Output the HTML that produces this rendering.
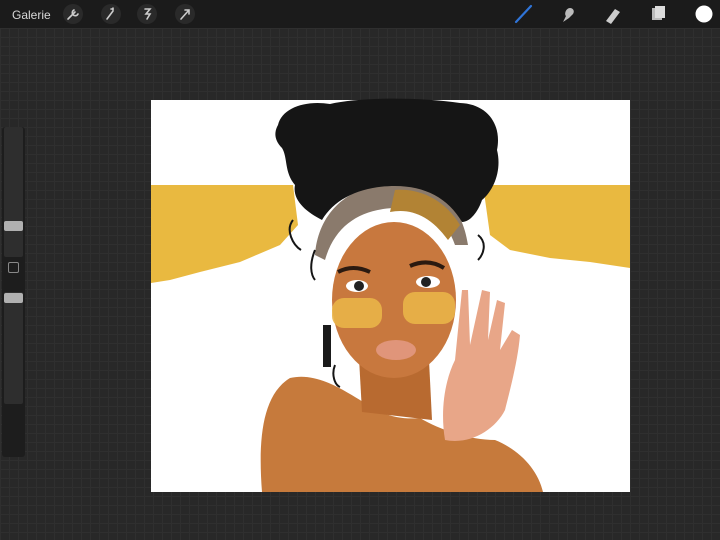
<!DOCTYPE html>
<html><head><style>
html,body{margin:0;padding:0;width:720px;height:540px;overflow:hidden;background:#282828;font-family:"Liberation Sans",sans-serif}
.grid{position:absolute;left:0;top:28px;width:720px;height:512px;background-color:#282828;background-image:linear-gradient(#2f2f2f 1px,transparent 1px),linear-gradient(90deg,#2f2f2f 1px,transparent 1px);background-size:9px 9px}
.top{position:absolute;left:0;top:0;width:720px;height:28px;background:#1b1b1b}
.gal{position:absolute;left:12px;top:8px;color:#d8d8d8;font-size:12px}
.ic{position:absolute;top:4px;width:20px;height:20px;border-radius:50%;background:#2a2a2a}
.side{position:absolute;left:2px;top:127px;width:23px;height:330px;background:#1d1d1d;border-radius:3px}
</style></head><body>
<div class="grid"></div>
<div class="top">
<div class="gal">Galerie</div>
<div class="ic" style="left:63px"></div><div class="ic" style="left:101px"></div><div class="ic" style="left:137px"></div><div class="ic" style="left:175px"></div>
<svg width="720" height="28" style="position:absolute;left:0;top:0">
<g stroke="#ccc" stroke-width="1.6" fill="none" stroke-linecap="round">
<path d="M68 19 L75 12 M74 10 a3 3 0 1 0 4 4"/>
<path d="M107 19 L113 11 M113 8 v2 M111 9 h2"/>
<path d="M145 9 h5 l-4 5 h4 l-3 5"/>
<path d="M181 19 L189 10 M185 10 h4 v4"/>
</g>
<path d="M516 22 L531 6" stroke="#2f74d8" stroke-width="2.2" stroke-linecap="round"/>
<path d="M563 22 l3-6 c-2-2 0-8 4-8 c3 0 5 3 3 6 l-4 4 z" fill="#bbb"/>
<path d="M606 21 l9-12 l5 3 l-9 12 z" fill="#ccc"/>
<rect x="652" y="8" width="10" height="12" fill="#bbb"/><rect x="655" y="6" width="10" height="12" fill="#ddd"/>
<circle cx="704" cy="14" r="8.5" fill="#fff"/>
</svg>
</div>
<div class="side">
<div style="position:absolute;left:2px;top:0;width:19px;height:130px;background:#2e2e2e;border-radius:2px"></div>
<div style="position:absolute;left:2px;top:94px;width:19px;height:10px;background:#b0b0b0;border-radius:2px"></div>
<div style="position:absolute;left:6px;top:135px;width:9px;height:9px;border:1.5px solid #888;border-radius:2px"></div>
<div style="position:absolute;left:2px;top:165px;width:19px;height:112px;background:#2e2e2e;border-radius:2px"></div>
<div style="position:absolute;left:2px;top:166px;width:19px;height:10px;background:#b0b0b0;border-radius:2px"></div>
</div>
<svg width="720" height="540" style="position:absolute;left:0;top:0">
<rect x="151" y="100" width="479" height="392" fill="#fff"/>
<path d="M151 185 H293 L298 225 L280 245 L240 262 L200 272 L170 280 L151 283 Z" fill="#e9b940"/>
<path d="M483 185 H630 V268 L590 262 L550 258 L510 250 L490 235 Z" fill="#e9b940"/>
<!-- body -->
<path d="M262 492 C258 440 262 395 290 378 C315 372 340 388 360 400 C380 415 400 420 420 418 C440 430 470 440 495 440 C520 450 538 470 543 492 Z" fill="#c67a3c"/>
<path d="M358 340 L428 340 L432 420 L362 412 Z" fill="#b86a30"/>
<!-- face -->
<ellipse cx="394" cy="300" rx="62" ry="78" fill="#c8783e"/>
<!-- headband -->
<path d="M315 255 C318 215 345 185 395 183 C440 185 462 205 468 245 L455 245 C445 215 420 205 393 208 C360 210 335 225 325 260 Z" fill="#8a7a6c"/>
<path d="M395 190 C420 188 445 200 460 225 L448 240 C430 215 410 208 390 212 Z" fill="#b28334"/>
<!-- hair -->
<path d="M278 125 C282 108 305 100 330 104 C360 97 420 97 460 103 C488 104 502 125 497 150 C502 170 494 190 482 200 C478 212 470 222 462 222 C448 198 425 186 395 186 C362 186 335 198 322 220 C306 212 292 200 295 185 C284 172 288 158 282 148 C274 140 274 132 278 125 Z" fill="#151515"/>
<path d="M293 220 c-8 10 0 25 8 30 M478 235 c10 8 5 20 0 25 M315 250 c-6 15 -4 25 0 30 M335 365 c-4 10 0 20 5 22" stroke="#151515" stroke-width="2" fill="none"/>
<rect x="323" y="325" width="8" height="42" fill="#1a1a1a"/>
<!-- eyes -->
<path d="M338 272 q15-8 32 0" stroke="#2b1a10" stroke-width="4" fill="none"/>
<path d="M410 266 q18-8 34 2" stroke="#2b1a10" stroke-width="4" fill="none"/>
<ellipse cx="357" cy="286" rx="11" ry="6" fill="#fff"/><circle cx="359" cy="286" r="5" fill="#222"/>
<ellipse cx="428" cy="282" rx="12" ry="6" fill="#fff"/><circle cx="426" cy="282" r="5" fill="#222"/>
<!-- glasses -->
<rect x="332" y="298" width="50" height="30" rx="12" fill="#e9b448" opacity=".9"/>
<rect x="403" y="292" width="52" height="32" rx="12" fill="#e9b448" opacity=".9"/>
<!-- lips -->
<ellipse cx="396" cy="350" rx="20" ry="10" fill="#e0957a"/>
<!-- hand -->
<path d="M445 440 C440 410 445 380 455 360 L462 290 L468 290 L470 345 L482 290 L490 292 L488 340 L497 300 L505 303 L500 350 L512 330 L520 335 C518 360 510 390 505 410 C495 430 470 445 445 440 Z" fill="#e8a688"/>
</svg>
</body></html>
